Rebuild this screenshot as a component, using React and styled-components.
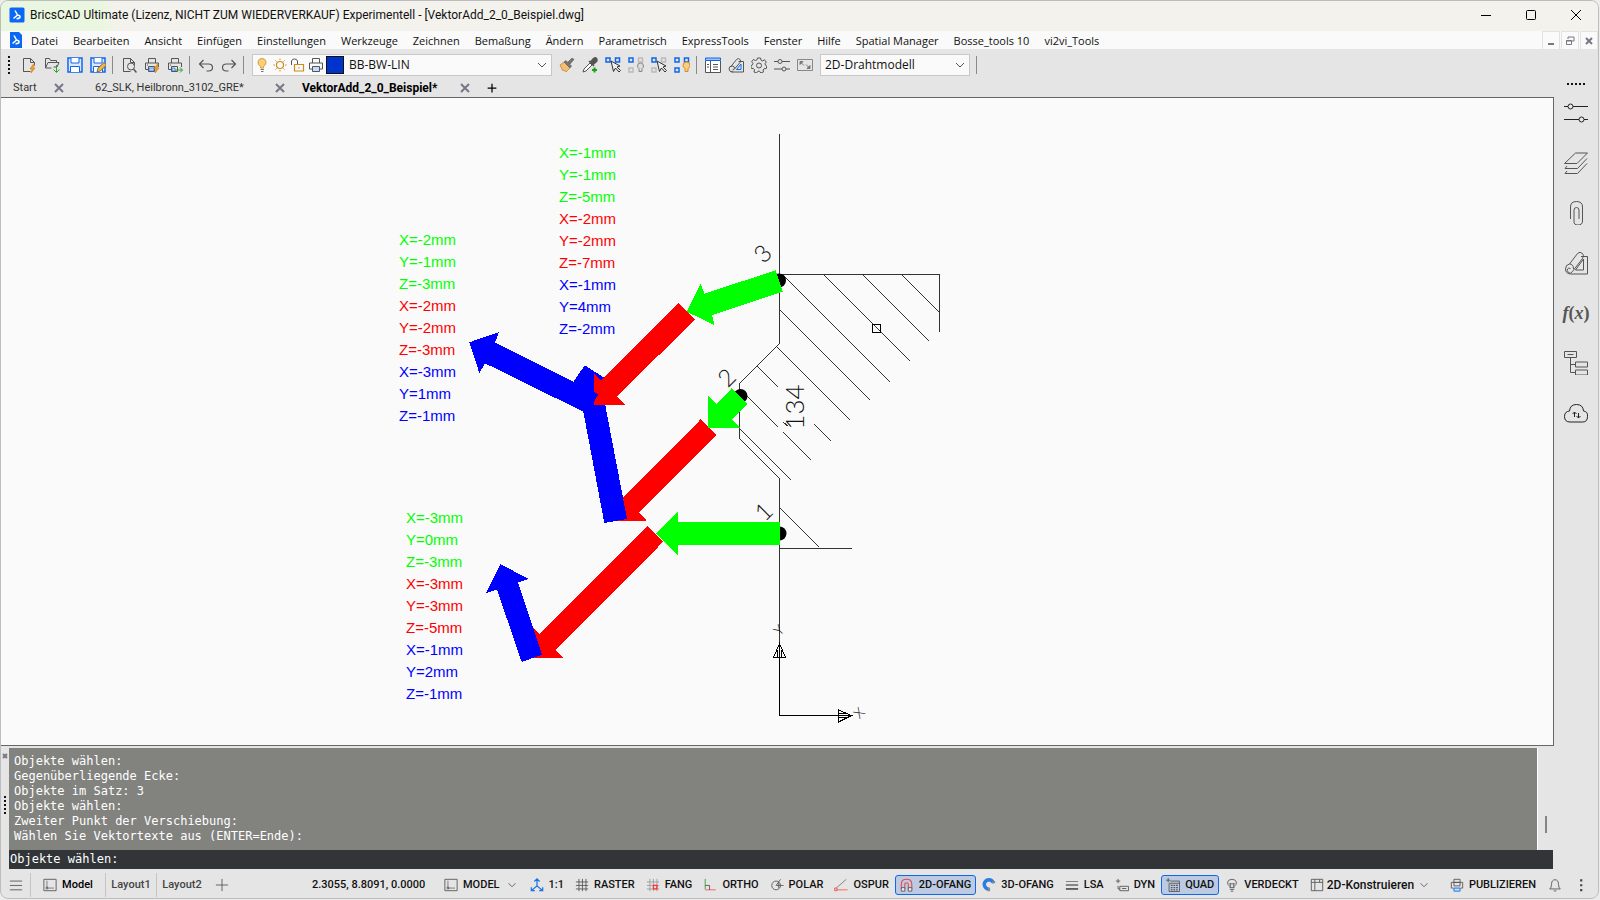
import { useState } from 'react';
import styled, { createGlobalStyle, css } from 'styled-components';

const GREEN = '#00ff00'
const RED = '#ff0000'
const BLUE = '#0000ff'

const menus = ['Datei', 'Bearbeiten', 'Ansicht', 'Einfügen', 'Einstellungen', 'Werkzeuge', 'Zeichnen', 'Bemaßung', 'Ändern', 'Parametrisch', 'ExpressTools', 'Fenster', 'Hilfe', 'Spatial Manager', 'Bosse_tools 10', 'vi2vi_Tools']

const history = ['Objekte wählen:', 'Gegenüberliegende Ecke:', 'Objekte im Satz: 3', 'Objekte wählen:', 'Zweiter Punkt der Verschiebung:', 'Wählen Sie Vektortexte aus (ENTER=Ende):']

const vectorTexts = [
  { x: 559, y: 158, lines: ['X=-1mm', 'Y=-1mm', 'Z=-5mm', 'X=-2mm', 'Y=-2mm', 'Z=-7mm', 'X=-1mm', 'Y=4mm', 'Z=-2mm'] },
  { x: 399, y: 245, lines: ['X=-2mm', 'Y=-1mm', 'Z=-3mm', 'X=-2mm', 'Y=-2mm', 'Z=-3mm', 'X=-3mm', 'Y=1mm', 'Z=-1mm'] },
  { x: 406, y: 523, lines: ['X=-3mm', 'Y=0mm', 'Z=-3mm', 'X=-3mm', 'Y=-3mm', 'Z=-5mm', 'X=-1mm', 'Y=2mm', 'Z=-1mm'] },
]

const pointNumbers = [
  { n: '3', x: 763, y: 254 },
  { n: '2', x: 727, y: 378 },
  { n: '1', x: 764, y: 512 },
]

// later arrows lie over earlier ones
const arrows = [
  [RED, '700.7,419.3 716.7,435 639,512.7 646.7,520.7 615.7,520.7 615.7,489.3 623.3,497.3'],
  [BLUE, '584.7,365.3 610,381.3 602,388 627,519 604.3,523 583,410 568,390'],
  [RED, '678.7,303 695,319.3 617,396.7 625,405 593.5,405 593.5,373.5 601.3,380.7'],
  [BLUE, '469.3,342.3 499,332 495,342.7 598.3,394 588,414 485,363.3 479.3,373'],
  [GREEN, '775.7,270.3 782.7,291.7 712,315.3 714.7,325.3 686.7,311.7 700.7,283.3 704.3,293.7'],
  [GREEN, '731.7,388.3 747.7,404.3 732,419.7 740,427.7 708,427.7 708,395.7 716.3,404'],
  [RED, '647.3,526 663.3,541.7 555.7,649.7 563,657.7 531.7,657.7 531.7,626.3 539.7,634'],
  [GREEN, '780,522 780,545 678,545 678,556 655.7,533.7 678,511.7 678,522'],
  [BLUE, '500.3,564 528.7,579 518,582.3 542,654.7 521.7,662 497,589.7 486,593'],
]

const hatches = 'M902 275l37 37M863 275l66 66M824 275l86 86M782 274l108 108M780 310l90 90M777 347l73 73M757 366l21 21M739 388l39 39M783 432l28 28M814 424l17 17M783 422l5 4M739 428l52 52M780 508l39 39'

const DocIcon = () => <path d="M3.5 14.5h-1v-13h7l4 4v3M9.5 1.5v4h4M2.5 14.5h7" />

const icons = {
  neu: <><DocIcon /><path d="M12 7.5l-3 4.5h2l-1 4 4-5h-2l1.500-3.500z" fill="#f0a030" stroke="#c87818" strokeWidth=".6" /></>,
  oeffnen: <><path d="M1.500 11v-9.500h4l1 2h6v2M1.500 11l2.500-5.500h11l-2 4.500h-3.500M1.500 11h6" /><path d="M12.500 8v7M9.500 12.500l3 3 3-3" stroke="#2aa52a" /></>,
  sichern: <><path d="M1 1h14v14h-14z" fill="#d9e7ff" stroke="#1166e8" strokeWidth="1.500" /><path d="M4 1v5h8v-5M3.500 15v-5.500h9v5.500" fill="#fff" stroke="#1166e8" /></>,
  sichernAls: <><path d="M1 1h14v14h-14z" fill="#d9e7ff" stroke="#1166e8" strokeWidth="1.500" /><path d="M4 1v5h8v-5M3.500 15v-5.500h9v5.500" fill="#fff" stroke="#1166e8" /><path d="M7 15l1-4 6-5.500 2.500 2.500-6 6z" fill="#f3b73b" stroke="#555" strokeWidth=".8" /></>,
  vorschau: <><DocIcon /><circle cx="10" cy="9.500" r="3.500" fill="#e5e5e5" /><path d="M12.500 12l3 3.500" strokeWidth="1.500" /></>,
  druck: <><path d="M4.500 6v-4.500h7v4.500M4 12.500h-2.500v-6.500h13v4M4.500 9.500h6v5h-6zM3 8h1" /><path d="M5 11h5v3h-5z" fill="#bcd6ff" stroke="#1166e8" strokeWidth=".6" /><path d="M13 7.500l-3 4.500h2l-1 4 4-5h-2l1.500-3.500z" fill="#f0a030" stroke="#c87818" strokeWidth=".6" /></>,
  druckPlus: <><path d="M4.500 6v-4.500h7v4.500M4 12.500h-2.500v-6.500h13v4M4.500 9.500h6v5h-6zM3 8h1" /><path d="M5 11h3v3h-3z" fill="#bcd6ff" stroke="#1166e8" strokeWidth=".6" /><path d="M8 13h7.500M13 10.500l2.500 2.500-2.500 2.500" stroke="#2aa52a" /></>,
  zurueck: <path d="M5.500 3l-4 4 4 4M1.500 7h9q4 0 4 3.500t-4 3.500h-2" strokeWidth="1.200" />,
  vor: <path d="M10.500 3l4 4-4 4M14.500 7h-9q-4 0-4 3.500t4 3.500h2" strokeWidth="1.200" />,
  birne: <><path d="M5.500 11v-1.500q-3-2-2.500-5 .8-3 4-3t4 3q.5 3-2.500 5v1.500z" fill="#f8d27a" stroke="#dc9a32" transform="translate(1 0)" /><path d="M6.500 12.500h3.500M7 14.500h2.500" stroke="#777" /></>,
  sonne: <><circle cx="8" cy="8" r="3.500" stroke="#d08a1c" strokeWidth="1.200" /><path d="M8 1.500v1.500M8 13v1.500M1.500 8h1.500M13 8h1.500M3.500 3.500l1 1M11.500 11.500l1 1M3.500 12.500l1-1M11.500 4.500l1-1" stroke="#d08a1c" /></>,
  schloss: <><path d="M4.500 7.500h9v6.500h-9z" stroke="#d08a1c" strokeWidth="1.200" /><path d="M9 10v1.500" stroke="#d08a1c" /><path d="M7.500 7v-3q-.5-2-3-2t-3 2v4" /></>,
  drucker: <><path d="M4.500 6v-4.500h7v4.500M4 12h-2.500v-6h13v6h-2.500" /><path d="M4.500 9.500h7v5h-7z" fill="#c4dcff" /></>,
  pinsel: <><path d="M1 8l4-3 6 6-4 4q-2-1-2-2l-1.500.5z" fill="#f2bd76" stroke="#c98633" strokeWidth=".8" /><path d="M5 5l2-1.500 5.500 5.500-1.500 2zM9 5l4-4 2 1.500-4 4.500z" fill="#777" stroke="#555" strokeWidth=".6" /></>,
  pipette: <><path d="M1 15l1-3 6-6 2 2-6 6z" fill="#fff" /><path d="M7 4l5 5M8.500 5l3-3.500q2-1.500 3 0t0 3l-3.500 3z" fill="#555" strokeWidth="1.500" /><path d="M12.500 10.500v5M10 13h5" stroke="#13a80d" strokeWidth="2" /></>,
  wahl1: <><path d="M1 1h4v4h-4zM10.500 1h4v4h-4z" stroke="#1166e8" strokeWidth="1.500" /><path d="M6 4l2.500 10.500 2-3.500 3.500 4 1.500-1.500-3.500-3.500 3-1z" fill="#eee" stroke="#333" /></>,
  wahl2: <><path d="M1 1h4v4h-4z" stroke="#1166e8" strokeWidth="1.500" /><path d="M10.500 1h4v4h-4zM1 11h4v4h-4z" stroke="#bbb" strokeWidth="1.500" /><path d="M12.500 6q-3 0-3 3 0 1.500 1.500 2.500v3h3v-3q1.500-1 1.500-2.500 0-3-3-3z" fill="#ddd" stroke="#888" /></>,
  wahl3: <><path d="M1 1h4v4h-4z" stroke="#1166e8" strokeWidth="1.500" /><path d="M10.500 1h4v4h-4zM1 11h4v4h-4z" stroke="#bbb" strokeWidth="1.500" /><path d="M6 4l2.500 10.500 2-3.500 3.500 4 1.500-1.500-3.500-3.500 3-1z" fill="#eee" stroke="#333" /></>,
  wahl4: <><path d="M1 1h4v4h-4zM10.500 1h4v4h-4zM1 11h4v4h-4z" stroke="#1166e8" strokeWidth="1.500" /><path d="M12.500 5q-3.500 0-3.500 3.500 0 2 2 3v3h3v-3q2-1 2-3 0-3.500-3.500-3.500z" fill="#f8cf82" stroke="#d48c20" /></>,
  paneele: <><path d="M.5 4v11.500h15v-11.500" fill="#fff" /><path d="M5.500 4v11M8 7.500h5M8 10h5M8 12.500h5M2 7.500h2M2 10h2" /><path d="M.5 1h15v2.500h-15z" fill="#9cc4ff" stroke="#1166e8" /></>,
  plan: <><path d="M10.500 4.500h5v10.500h-12M2.500 10l6-7.500q2-2 3.500 0t0 3l-5.500 6.500M5 15q-4 0-4-3t3-3q2.500 0 2.500 2t-2 2" /><path d="M13 7v5.500h-4.500z" stroke="#1166e8" /></>,
  rad: <><path d="M6.500 1h3l.5 2.200 1.500.7 2-1.100 1.800 2.200-1.300 1.700.5 1.500 1.300.8-.5 2.500-2.300.3-1 1.200.5 2-2.600 1-1.400-1.800h-1.500l-1.500 1.800-2.500-1 .5-2.200-1-1.200-2.200-.3-.5-2.500 1.700-1 .5-1.300-1.300-1.800 1.700-2.200 2.100 1 1.500-.7z" /><circle cx="8" cy="8.500" r="2.500" /></>,
  regler: <path d="M0 4.500h4M8 4.500h8M0 12h8M12 12h4M4 4.500a2 2 0 1 0 4 0a2 2 0 1 0-4 0M8 12a2 2 0 1 0 4 0a2 2 0 1 0-4 0" />,
  fenster: <><path d="M.5 2.500h15v11h-15z" stroke="#888" /><path d="M3 4.500h3l-3 3zM4 5.500l3 3M13 11.500h-3l3-3zM12 10.500l-3-3" fill="#777" stroke="#777" /></>,
  modell: <><path d="M1 1.500h14v13h-14z" /><path d="M4.500 3v8.500h8M3.500 10.500h2v2h-2z" strokeWidth=".8" /></>,
  skala: <path d="M8 9v-8M5 4l3-3 3 3M8 9l-6 5M8 9l6 5M1.500 10.500v4h4M14.500 10.500v4h-4" stroke="#1a73e0" strokeWidth="1.400" />,
  raster: <path d="M4.500 1v14M8.500 1v14M12.500 1v14M1 4.500h14M1 8.500h14M1 12.500h14" />,
  fang: <><path d="M4.500 1v14M8.500 1v14M12.500 1v14M1 4.500h14M1 8.500h14M1 12.500h14" stroke="#999" /><path d="M8.500 8.500h4v4h-4z" stroke="#f33" strokeWidth="1.500" /></>,
  ortho: <><path d="M2.500 1v12" stroke="#2aa52a" /><path d="M2.500 13.500h12" stroke="#f55" /><path d="M2.500 8.500h5v5" /></>,
  polar: <><circle cx="7" cy="8.500" r="5" /><path d="M7 8.500l5-7M7 8.500h8.500M10 5v6.500" /></>,
  ospur: <><path d="M2 12l12-10.500" stroke="#777" /><path d="M2 13.500h13.500M.5 11.500h3v3h-3z" stroke="#f55" /></>,
  magnet: <><path d="M1.500 12v-5q0-5.500 6-5.500t6 5.500v5h-4v-5q0-1.500-2-1.500t-2 1.500v5z" stroke="#f04444" strokeWidth="1.200" /><path d="M1.500 11h4v4h-4zM9.500 11h4v4h-4z" fill="#eee" /></>,
  magnet3d: <><path d="M8 13q-5-1-5.500-6 1-5 6-5 3.500.5 4 3.500" stroke="#2d7de0" strokeWidth="4" /><path d="M11 5.500l4-1M8 11v4" stroke="#888" strokeWidth="2.500" /></>,
  lsa: <><path d="M1 4h14" stroke="#777" /><path d="M1 8h14" strokeWidth="1.500" /><path d="M1 12.500h14" strokeWidth="2" /></>,
  dyn: <path d="M3.500 1v5M1 3.500h5M3.500 9v3.500h2M5.500 9.500h10v5h-10zM8 12h5" />,
  quad: <><path d="M2.500 0v5M0 2.500h5M5 3.500h10.500v12h-12v-9M3.500 6h12" /><path d="M5.500 8.500h8M5.500 11h8M5.500 13.500h8" strokeWidth="1.500" strokeDasharray="2 1" /></>,
  verdeckt: <path d="M5.500 11v-1.500q-3-2-2.500-5 1-3 5-3t5 3q.5 3-2.500 5v1.500zM5.500 13h5M6.500 15h3M6.500 10l-1-4 2.500 1 2.500-1-1 4" />,
  konstruieren: <path d="M1.500 1.500h13v13h-13zM1.500 5h13M5.500 5v9.500M5.500 1.500v3M11 1.500v3.500" />,
  publizieren: <><path d="M4.500 5v-3.500h7v3.500M4 11.500h-2.500v-6.500h13v6.500h-2.500M4.500 5h7v4h-7z" /><path d="M4.500 11.500h7v3.500h-7z" fill="#c4dcff" stroke="#1166e8" /></>,
  glocke: <path d="M2 12.500q2-1.500 2-5 0-5.500 4-5.500t4 5.500q0 3.500 2 5zM6.500 14.500q1.500 1 3 0" />,
  punkte: <path d="M7 1.500h2.500v2.500h-2.500zM7 7h2.500v2.500h-2.500zM7 12.500h2.500v2.500h-2.500z" fill="#444" stroke="none" />,
  menue: <path d="M1 3.500h14M1 8.500h14M1 13.500h14" />,
  plus: <path d="M8 1v14M1 8h14" />,
  kreuz: <path d="M4 4l8 8M12 4l-8 8" strokeWidth="2" stroke="#777785" />,
  pfeil: <path d="M4 6l4 4 4-4" />,
}

const railIcons = {
  Eigenschaften: <path d="M0 5.500h4M9 5.500h15M0 18.500h15M20 18.500h4M4 5.500a2.500 2.500 0 1 0 5 0a2.500 2.500 0 1 0-5 0M15 18.500a2.500 2.500 0 1 0 5 0a2.500 2.500 0 1 0-5 0" stroke="#222" />,
  Layer: <path d="M11.500 2h12l-10.500 10.500h-12.500zM3 15l-2 2.500h12.500l9.500-10M3 20l-2 2.500h12.500l9.500-10" />,
  Anhänge: <path d="M6.500 18v-12q0-5.500 6-5.500t6 5.500v14q0 4-4.500 4t-4-4v-11q0-2.500 2.500-2.500t2.500 2.500v9" />,
  Pläne: <path d="M17 5.500h6.500v17.500h-17q-5-.5-5-5t4-5l8-10.500q2.500-2.500 5 0 2 2 0 5l-10 13q-2 3-4 1t-1-3.500 3-.5M5.500 13q4 0 4 5M19.500 8v11h-8z" />,
  Strukturen: <path d="M.5.500h12v6h-12zM3.500 3.500h6M6.500 6.500v15h5M6.500 13.500h5M11.500 11h12v5h-12zM11.500 19h12v5h-12z" />,
  Cloud: <path d="M6 21q-5.500 0-5.500-5.500 0-5 5-5.500.5-6.500 7-6.500t7 6.500q4.500.5 4 5.500 0 5.500-5 5.500zM10.500 16v-5M8.500 13l2-2 2 2M14.500 12v5M12.500 15l2 2 2-2" stroke="#222" />,
}

const Icon = ({ name, size = 16 }) => (
  <Glyph $size={size} viewBox="0 0 16 16" aria-hidden="true">{icons[name]}</Glyph>
)

const Logo = ({ page }) => (
  <Glyph $size={16} viewBox="0 0 16 16" aria-hidden="true">
    <path d={page ? 'M2 0h9l3 3v13h-12z' : 'M2 .5h12q1.500 0 1.500 1.500v12q0 1.500-1.500 1.500h-12q-1.500 0-1.500-1.500v-12q0-1.500 1.500-1.500z'} fill="#0a68f5" stroke="none" />
    <path d="M6 3.500l2.500 4.500-4 3.500M8.500 8q3 .5 2.500 2.500-1 1.500-3.500 1" stroke="#fff" strokeWidth="1.500" />
  </Glyph>
)

const Tools = ({ names }) => names.map((name) => (
  <ToolButton key={name} type="button" aria-label={name}><Icon name={name} /></ToolButton>
))

const Toolbar = () => (
  <ToolRow>
    <Grip />
    <Tools names={['neu', 'oeffnen', 'sichern', 'sichernAls']} />
    <Divider />
    <Tools names={['vorschau', 'druck', 'druckPlus']} />
    <Divider />
    <Tools names={['zurueck', 'vor']} />
    <Divider />
    <Combo $width={300}>
      <Icon name="birne" /><Icon name="sonne" /><Icon name="schloss" /><Icon name="drucker" />
      <Swatch />
      <select aria-label="Layer"><option>BB-BW-LIN</option></select>
      <Icon name="pfeil" />
    </Combo>
    <Tools names={['pinsel', 'pipette', 'wahl1', 'wahl2', 'wahl3', 'wahl4']} />
    <Divider />
    <Tools names={['paneele', 'plan', 'rad', 'regler', 'fenster']} />
    <Combo $width={150}>
      <select aria-label="Visueller Stil"><option>2D-Drahtmodell</option></select>
      <Icon name="pfeil" />
    </Combo>
    <Divider />
  </ToolRow>
)

const Drawing = () => (
  <svg viewBox="1 98 1552 647" preserveAspectRatio="xMinYMin meet">
    <g fill="none" stroke="#333" shapeRendering="crispEdges">
      <path d="M779.500 134v209.500l-40 40v55l40 40v166M779.500 274.500h160v57M779.500 548.500h72" />
      <path d={hatches} transform="translate(.5 .5)" />
      <path d="M779.500 644v71.500h72M779.500 643.500l-6 14h12zM777.500 657v-7M781.500 657v-7M838.500 710v12l13-6.500zM839 713.500h7M839 717.500h7" stroke="#000" />
    </g>
    <circle cx="779" cy="280.500" r="7" />
    <circle cx="740.500" cy="396" r="7" />
    <circle cx="779.500" cy="533.500" r="7" />
    <g shapeRendering="crispEdges">
      {arrows.map(([color, points]) => <polygon key={points} points={points} fill={color} />)}
    </g>
    <rect x="872.500" y="324.500" width="8" height="8" fill="none" stroke="#000" />
    {vectorTexts.map(({ x, y, lines }) => (
      <VectorText key={x}>
        {lines.map((line, i) => (
          <text key={line + i} x={x} y={y + i * 22} fill={[GREEN, RED, BLUE][Math.floor(i / 3)]}>{line}</text>
        ))}
      </VectorText>
    ))}
    {pointNumbers.map(({ n, x, y }) => (
      <Plotted key={n} $size={24} transform={`translate(${x} ${y}) rotate(-45)`} dy="8">{n}</Plotted>
    ))}
    <Plotted $size={26} transform="translate(795 407) rotate(-90)" dy="9">134</Plotted>
    <Plotted $size={14} transform="translate(779 630) rotate(-45)" dy="5">Y</Plotted>
    <Plotted $size={14} transform="translate(859 713) rotate(-45)" dy="5">X</Plotted>
  </svg>
)

const StatusItem = ({ icon, children, initial = false }) => {
  const [on, setOn] = useState(initial)
  return (
    <StatusButton type="button" $on={on} aria-pressed={on} onClick={() => setOn(!on)}>
      <Icon name={icon} size={14} />{children}
    </StatusButton>
  )
}

const App = () => {
  const [command, setCommand] = useState('')
  return (
    <Window>
      <GlobalStyle />
      <TitleBar>
        <Logo />
        <h1>BricsCAD Ultimate (Lizenz, NICHT ZUM WIEDERVERKAUF) Experimentell - [VektorAdd_2_0_Beispiel.dwg]</h1>
        <WindowButton type="button" aria-label="Minimieren"><svg viewBox="0 0 12 12"><path d="M1 6.500h10" /></svg></WindowButton>
        <WindowButton type="button" aria-label="Maximieren"><svg viewBox="0 0 12 12"><rect x="1.500" y="1.500" width="9" height="9" rx="1" /></svg></WindowButton>
        <WindowButton type="button" aria-label="Schließen"><svg viewBox="0 0 12 12"><path d="M1 1l10 10M11 1l-10 10" /></svg></WindowButton>
      </TitleBar>
      <MenuBar>
        <Logo page />
        <nav>{menus.map((name) => <button key={name} type="button">{name}</button>)}</nav>
        <ChildButtons>
          <button type="button" aria-label="Zeichnung minimieren"><svg viewBox="0 0 10 10"><path d="M2 8h6" strokeWidth="2" /></svg></button>
          <button type="button" aria-label="Zeichnung wiederherstellen"><svg viewBox="0 0 10 10"><path d="M3 3v-2h6v4h-2M1.500 4.500h5v4h-5zM1 5h6" /></svg></button>
          <button type="button" aria-label="Zeichnung schließen"><svg viewBox="0 0 10 10"><path d="M2 2l6 6M8 2l-6 6" strokeWidth="2" /></svg></button>
        </ChildButtons>
      </MenuBar>
      <Toolbar />
      <Body>
        <Main>
          <TabBar>
            <Tab $width={54}><button type="button">Start</button><button type="button" aria-label="Start schließen"><Icon name="kreuz" /></button></Tab>
            <Tab $width={207} $indent={14}><button type="button">62_SLK, Heilbronn_3102_GRE*</button><button type="button" aria-label="62_SLK schließen"><Icon name="kreuz" /></button></Tab>
            <Tab $width={171} $active><button type="button">VektorAdd_2_0_Beispiel*</button><button type="button" aria-label="VektorAdd schließen"><Icon name="kreuz" /></button></Tab>
            <AddTab type="button" aria-label="Neuer Tab"><Icon name="plus" size={10} /></AddTab>
          </TabBar>
          <Canvas><Drawing /></Canvas>
          <CommandPanel>
            <CommandEdge>
              <svg viewBox="0 0 6 6" width="6" height="6"><path d="M1 1l4 4M5 1l-4 4" stroke="#777785" strokeWidth="2" /></svg>
              <Grip />
            </CommandEdge>
            <CommandBody>
              <HistoryRow>
                <History>{history.map((line, i) => <p key={i}>{line}</p>)}</History>
                <ScrollTrack><span /></ScrollTrack>
              </HistoryRow>
              <CommandLine>
                <label htmlFor="command">Objekte wählen:</label>
                <input id="command" value={command} onChange={(e) => setCommand(e.target.value)} />
              </CommandLine>
            </CommandBody>
          </CommandPanel>
        </Main>
        <Rail>
          <RailGrip />
          {Object.entries(railIcons).slice(0, 4).map(([name, path]) => (
            <RailButton key={name} type="button" aria-label={name}><Glyph $size={24} viewBox="0 0 24 24">{path}</Glyph></RailButton>
          ))}
          <RailButton type="button"><i>f</i>(<i>x</i>)</RailButton>
          {Object.entries(railIcons).slice(4).map(([name, path]) => (
            <RailButton key={name} type="button" aria-label={name}><Glyph $size={24} viewBox="0 0 24 24">{path}</Glyph></RailButton>
          ))}
        </Rail>
      </Body>
      <StatusBar>
        <LayoutTabs>
          <LayoutTab type="button" aria-label="Layouts" $width={30}><Icon name="menue" size={14} /></LayoutTab>
          <LayoutTab type="button" $width={75} $active><Icon name="modell" size={14} />Model</LayoutTab>
          <LayoutTab type="button" $width={51}>Layout1</LayoutTab>
          <LayoutTab type="button" $width={51} $last>Layout2</LayoutTab>
          <LayoutTab type="button" aria-label="Neues Layout" $width={28} $last><Icon name="plus" size={14} /></LayoutTab>
        </LayoutTabs>
        <Coordinates>2.3055, 8.8091, 0.0000</Coordinates>
        <StatusItems>
          <StatusButton type="button"><Icon name="modell" size={14} />MODEL<Icon name="pfeil" size={14} /></StatusButton>
          <StatusItem icon="skala">1:1</StatusItem>
          <StatusItem icon="raster">RASTER</StatusItem>
          <StatusItem icon="fang">FANG</StatusItem>
          <StatusItem icon="ortho">ORTHO</StatusItem>
          <StatusItem icon="polar">POLAR</StatusItem>
          <StatusItem icon="ospur">OSPUR</StatusItem>
          <StatusItem icon="magnet" initial>2D-OFANG</StatusItem>
          <StatusItem icon="magnet3d">3D-OFANG</StatusItem>
          <StatusItem icon="lsa">LSA</StatusItem>
          <StatusItem icon="dyn">DYN</StatusItem>
          <StatusItem icon="quad" initial>QUAD</StatusItem>
          <StatusItem icon="verdeckt">VERDECKT</StatusItem>
          <StatusButton type="button" $large><Icon name="konstruieren" size={14} />2D-Konstruieren<Icon name="pfeil" size={14} /></StatusButton>
        </StatusItems>
        <StatusEnd>
          <StatusButton type="button"><Icon name="publizieren" size={14} />PUBLIZIEREN</StatusButton>
          <StatusButton type="button" aria-label="Meldungen"><Icon name="glocke" size={14} /></StatusButton>
          <StatusButton type="button" aria-label="Mehr"><Icon name="punkte" size={14} /></StatusButton>
        </StatusEnd>
      </StatusBar>
    </Window>
  )
}

export default App

const GlobalStyle = createGlobalStyle`
  *{
    box-sizing: border-box;
  }
  body{
    margin: 0;
    background-color: #ececec;
    font-family: "Open Sans", sans-serif;
    font-size: 11px;
    color: #111;
  }
  button, input, select{
    font: inherit;
    color: inherit;
    margin: 0;
    padding: 0;
    border: none;
    background: none;
    white-space: nowrap;
  }
`

const Window = styled.div`
  display: flex;
  flex-direction: column;
  height: calc(100vh - 1px);
  margin-right: 1px;
  border: 1px solid #bdbdbd;
  border-radius: 8px;
  overflow: hidden;
  background-color: #e5e5e5;
`

const Glyph = styled.svg`
  display: block;
  flex: none;
  width: ${({ $size }) => $size}px;
  height: ${({ $size }) => $size}px;
  fill: none;
  stroke: #555;
`

const TitleBar = styled.header`
  display: flex;
  align-items: center;
  height: 30px;
  padding: 0 0 2px 8px;
  background: linear-gradient(90deg, #eaf7e0 100px, #f4f2ed 116px);
  h1{
    flex: 1;
    margin: 0;
    padding-left: 5px;
    font-family: Roboto, sans-serif;
    font-size: 12px;
    font-weight: 400;
  }
`

const WindowButton = styled.button`
  display: flex;
  justify-content: center;
  align-items: center;
  width: 45px;
  height: 28px;
  svg{
    width: 12px;
    height: 12px;
    fill: none;
    stroke: #000;
  }
`

const MenuBar = styled.div`
  display: flex;
  align-items: center;
  height: 18px;
  padding-left: 7px;
  background-color: #fafafa;
  nav{
    flex: 1;
    display: flex;
    gap: 15px;
    padding-left: 7px;
  }
`

const ChildButtons = styled.div`
  display: flex;
  gap: 1px;
  button{
    display: flex;
    justify-content: center;
    align-items: center;
    width: 18px;
    height: 18px;
    border: 1px solid #e2e2e2;
    border-bottom: none;
  }
  svg{
    width: 10px;
    height: 10px;
    fill: none;
    stroke: #777785;
  }
`

const ToolRow = styled.div`
  display: flex;
  align-items: center;
  height: 31px;
  padding-left: 7px;
`

const Grip = styled.span`
  width: 2px;
  height: 18px;
  background: repeating-linear-gradient(#111 0 2px, transparent 2px 4px);
`

const ToolButton = styled.button`
  display: flex;
  justify-content: center;
  width: 23px;
  &:first-of-type{
    margin-left: 7px;
  }
`

const Divider = styled.span`
  width: 1px;
  height: 18px;
  margin: 0 4px 0 3px;
  background-color: #8a8a8a;
`

const Combo = styled.div`
  display: flex;
  align-items: center;
  gap: 2px;
  width: ${({ $width }) => $width}px;
  height: 22px;
  margin: 0 3px 0 4px;
  padding: 0 1px;
  border: 1px solid #c8c8c8;
  background-color: #fafafa;
  select{
    flex: 1;
    min-width: 0;
    padding-left: 3px;
    appearance: none;
    font-size: 12px;
  }
`

const Swatch = styled.span`
  width: 18px;
  height: 18px;
  border: 1px solid #111;
  background-color: #0033cc;
`

const Body = styled.div`
  flex: 1;
  display: flex;
  min-height: 0;
`

const Main = styled.main`
  flex: 1;
  display: flex;
  flex-direction: column;
  min-width: 0;
`

const TabBar = styled.div`
  display: flex;
  align-items: center;
  gap: 14px;
  height: 17px;
  padding: 0 0 2px 12px;
  font-family: Roboto, sans-serif;
`

const Tab = styled.div`
  display: flex;
  justify-content: space-between;
  align-items: center;
  width: ${({ $width }) => $width}px;
  padding-left: ${({ $indent = 0 }) => $indent}px;
  color: ${({ $active }) => $active ? '#000' : '#333'};
  font-size: ${({ $active }) => $active ? 12 : 11}px;
  font-weight: ${({ $active }) => $active ? 700 : 400};
`

const AddTab = styled.button`
  svg{
    stroke: #000;
    stroke-width: 2;
  }
`

const Canvas = styled.section`
  flex: 1;
  min-height: 0;
  border: 1px solid #666;
  border-left: none;
  background-color: #fafafa;
  overflow: hidden;
  svg{
    display: block;
    width: 100%;
    height: 100%;
  }
`

const VectorText = styled.g`
  font-family: "Liberation Sans", sans-serif;
  font-size: 15px;
`

const Plotted = styled.text`
  font-family: Lato, sans-serif;
  font-size: ${({ $size }) => $size}px;
  font-weight: 300;
  text-anchor: middle;
  fill: #111;
`

const CommandPanel = styled.section`
  display: flex;
  height: 123px;
  padding-top: 2px;
  font-family: "DejaVu Sans Mono", monospace;
  font-size: 12px;
`

const CommandEdge = styled.div`
  display: flex;
  flex-direction: column;
  align-items: center;
  gap: 37px;
  width: 8px;
  padding-top: 5px;
`

const CommandBody = styled.div`
  flex: 1;
  display: flex;
  flex-direction: column;
`

const HistoryRow = styled.div`
  flex: 1;
  display: flex;
`

const History = styled.div`
  flex: 1;
  padding: 6px 5px;
  border-right: 1px solid #fff;
  background-color: #82827f;
  color: #fff;
  p{
    margin: 0;
    line-height: 15px;
  }
`

const ScrollTrack = styled.div`
  display: flex;
  justify-content: center;
  align-items: flex-end;
  width: 16px;
  padding-bottom: 17px;
  span{
    width: 2px;
    height: 17px;
    background-color: #858585;
  }
`

const CommandLine = styled.div`
  display: flex;
  align-items: center;
  height: 20px;
  margin-right: 1px;
  padding: 0 1px 2px;
  background-color: #313538;
  color: #fff;
  input{
    flex: 1;
    padding-left: 8px;
    outline: none;
  }
`

const Rail = styled.aside`
  display: flex;
  flex-direction: column;
  align-items: center;
  width: 44px;
`

const RailGrip = styled.span`
  width: 18px;
  height: 2px;
  margin: 3px 0;
  background: repeating-linear-gradient(90deg, #111 0 2px, transparent 2px 4px);
`

const RailButton = styled.button`
  display: flex;
  justify-content: center;
  align-items: center;
  height: 50px;
  font: 700 18px/20px "Liberation Serif", serif;
  color: #555;
`

const StatusBar = styled.footer`
  display: flex;
  align-items: center;
  height: 29px;
  padding: 2px 5px 0 0;
  font-family: Roboto, sans-serif;
  font-weight: 500;
`

const LayoutTabs = styled.div`
  display: flex;
  flex: none;
  width: 311px;
`

const LayoutTab = styled.button`
  display: flex;
  justify-content: center;
  align-items: center;
  gap: 5px;
  width: ${({ $width }) => $width}px;
  height: 24px;
  border-right: 1px solid ${({ $last }) => $last ? 'transparent' : '#c4c4c4'};
  color: ${({ $active }) => $active ? '#000' : '#444'};
`

const Coordinates = styled.span`
  flex: none;
  width: 127px;
`

const StatusItems = styled.div`
  flex: 1;
  display: flex;
  gap: 1px;
`

const StatusButton = styled.button`
  display: flex;
  align-items: center;
  gap: ${({ $large }) => $large ? 3 : 5}px;
  height: 20px;
  padding: 0 4px;
  border: 1px solid transparent;
  font-size: ${({ $large }) => $large ? 12 : 11}px;
  ${({ $on }) => $on && css`
    border-color: #1068e8;
    border-radius: 3px;
    background-color: #bccbe3;
  `}
`

const StatusEnd = styled.div`
  display: flex;
  gap: 2px;
`
